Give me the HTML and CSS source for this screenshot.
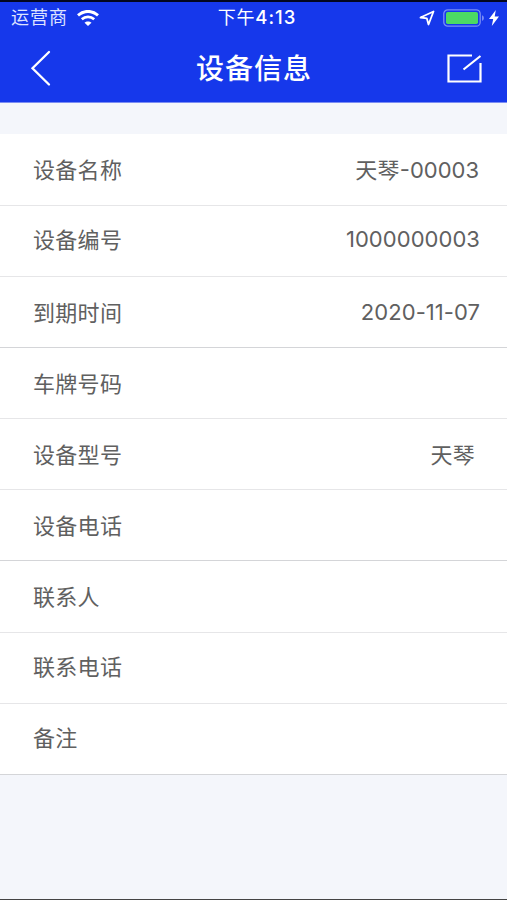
FILE: index.html
```html
<!DOCTYPE html>
<html lang="zh-CN">

<head>
    <meta charset="UTF-8">
    <meta name="viewport" content="width=device-width, initial-scale=1.0">
    <title>设备信息</title>
    <link rel="stylesheet" href="styles.css">
</head>

<body>
    <div class="page">
        <header class="header">
            <div class="status-bar">
                <div class="status-left">
                    <span class="carrier">运营商</span>
                    <svg class="wifi" width="22" height="16" viewBox="0 0 22 16">
                        <path d="M1 5.300C7 .1 15 .1 21 5.300" fill="none" stroke="#fff" stroke-width="3" />
                        <path d="M4.800 9.300c3.600-3.200 8.800-3.200 12.400 0" fill="none" stroke="#fff" stroke-width="2.700" />
                        <path d="M11 16L7.500 12.700c1.800-1.700 5.200-1.700 7 0z" fill="#fff" />
                    </svg>
                </div>
                <div class="time">下午<span class="clock">4:13</span></div>
                <div class="status-right">
                    <svg class="location" width="16" height="16" viewBox="0 0 16 16">
                        <path d="M1.500 7.500L14.500 1.500L9.500 14.500L7.800 8.300z" fill="none" stroke="#fff" stroke-width="1.800" stroke-linejoin="round" />
                    </svg>
                    <svg class="battery" width="42" height="18" viewBox="0 0 42 18">
                        <rect x=".8" y=".8" width="36.400" height="16.400" rx="4" fill="none" stroke="#7a8df5" stroke-width="1.300" />
                        <rect x="3" y="3" width="32" height="12" rx="1.800" fill="#4cd964" />
                        <path d="M39 6.200c2.500.8 2.500 4.800 0 5.600z" fill="#7a8df5" />
                    </svg>
                    <svg class="bolt" width="10" height="16" viewBox="0 0 10 16">
                        <path d="M6.800 0L0 9h4.200L2.800 16L10 6.600H5.700z" fill="#fff" />
                    </svg>
                </div>
            </div>
            <div class="nav-bar">
                <svg class="back" width="22" height="38" viewBox="0 0 22 38">
                    <path d="M20 3L3.500 19.200L20 35.500" fill="none" stroke="#fff" stroke-width="2.300" stroke-linecap="round" />
                </svg>
                <h1>设备信息</h1>
                <svg class="edit" width="36" height="30" viewBox="0 0 36 30">
                    <path d="M25 2.500H1.500v26h32V10M16.500 16.500L33.500 3" fill="none" stroke="#fff" stroke-width="2.200" />
                </svg>
            </div>
        </header>

        <ul class="info-list">
            <li class="row"><span>设备名称</span><span class="value mixed"><span class="name">天琴</span>-00003</span></li>
            <li class="row raised"><span>设备编号</span><span class="value number">1000000003</span></li>
            <li class="row dark"><span>到期时间</span><span class="value number">2020-11-07</span></li>
            <li class="row"><span>车牌号码</span></li>
            <li class="row"><span>设备型号</span><span class="value model">天琴</span></li>
            <li class="row dark"><span>设备电话</span></li>
            <li class="row"><span>联系人</span></li>
            <li class="row raised"><span>联系电话</span></li>
            <li class="row raised dark"><span>备注</span></li>
        </ul>
    </div>
</body>

</html>
```
FILE: styles.css
```css
* {
    box-sizing: border-box;
}

body {
    margin: 0;
    font-family: Inter, "Noto Sans CJK SC", sans-serif;
    background-color: #f4f6fb;
    color: #606060;
}

.page {
    height: 900px;
    overflow: hidden;
    border-bottom: 1px solid #444;
}

.header {
    height: 103px;
    background-color: #1638eb;
    border-top: 2px solid #02061f;
    border-bottom: 1px solid #7b8df3;
    color: #fff;
}

.status-bar {
    display: grid;
    grid-template-columns: 1fr auto 1fr;
    align-items: center;
    height: 31px;
    padding: 0 8px 0 11px;
    font-size: 18px;
    line-height: 31px;
}

.status-left,
.status-right {
    display: flex;
    align-items: center;
}

.status-right {
    justify-content: flex-end;
}

.carrier {
    letter-spacing: 1px;
    color: #dfe4ff;
}

.wifi {
    margin-left: 9px;
}

.time {
    padding-left: 4px;
    letter-spacing: 0.8px;
}

.clock {
    font-size: 18.5px;
    font-weight: 500;
    letter-spacing: 1px;
}

.battery {
    margin: 0 4px 0 8px;
}

.nav-bar {
    display: flex;
    align-items: center;
    justify-content: space-between;
    height: 69px;
    padding: 0 24px 0 29px;
}

h1 {
    margin: 0 0 1px 10px;
    font-size: 28px;
    font-weight: 500;
    letter-spacing: 1px;
}

.info-list {
    margin: 31px 0 0;
    padding: 0;
    list-style: none;
}

.row {
    display: flex;
    align-items: center;
    justify-content: space-between;
    height: 71.1px;
    padding: 0 27px 3px 33px;
    background-color: #fff;
    border-bottom: 1px solid #e6e6e8;
    font-size: 22px;
    letter-spacing: 0.3px;
}

.row:first-child {
    height: 72px;
}

.dark {
    border-bottom-color: #d4d5d8;
}

.raised {
    padding-bottom: 6px;
}

.value {
    letter-spacing: 0;
}

.number {
    padding-top: 2px;
    letter-spacing: 0.05px;
}

.mixed {
    margin-right: 1px;
}

.name {
    letter-spacing: 0.3px;
}

.model {
    margin-right: 5px;
    letter-spacing: 0.3px;
}
```
